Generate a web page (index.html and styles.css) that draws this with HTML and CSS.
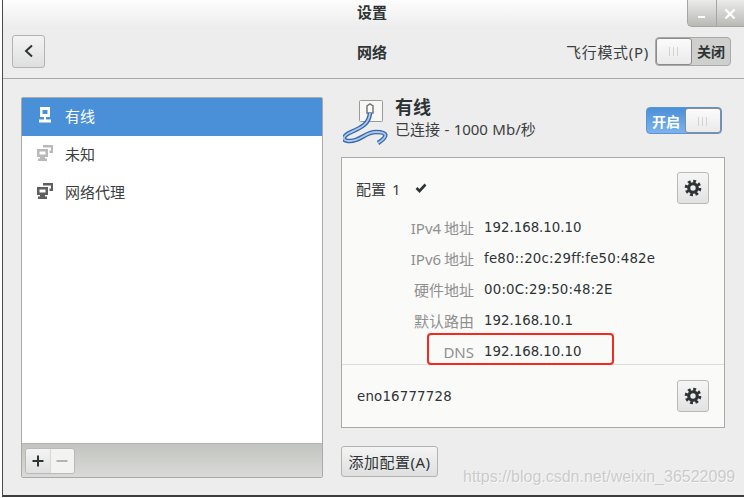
FILE: index.html
```html
<!DOCTYPE html>
<html lang="zh">
<head>
    <meta charset="UTF-8">
    <meta name="viewport" content="width=device-width, initial-scale=1.0">
    <title>设置 - 网络</title>
    <link rel="stylesheet" href="styles.css">
</head>
<body>
    <div class="window">
        <!-- 标题栏 -->
        <div class="titlebar">设置</div>
        <div class="wm-buttons">
            <span class="wm-btn"><svg width="10" height="10" viewBox="0 0 10 10"><rect x="1" y="7" width="7" height="2" fill="#fff"/></svg></span>
            <span class="wm-btn"><svg width="12" height="12" viewBox="0 0 12 12"><path d="M1.5 1.5l9 9M10.5 1.5l-9 9" stroke="#fff" stroke-width="2.4"/></svg></span>
        </div>

        <div class="header">
            <button class="back-btn">
                <svg width="12" height="14" viewBox="0 0 12 14"><path d="M9 1.5L3 7l6 5.5" fill="none" stroke="#2e3436" stroke-width="2"/></svg>
            </button>
            <div class="header-title">网络</div>
            <div class="airplane">
                <span class="airplane-label">飞行模式(P)</span>
                <div class="switch switch-off">
                    <span class="knob"></span>
                    <span class="switch-text">关闭</span>
                </div>
            </div>
        </div>

        <div class="content">
            <!-- 左侧列表 -->
            <div class="sidebar">
                <ul class="net-list">
                    <li class="net-item selected">
                        <svg class="net-icon" width="16" height="16" viewBox="0 0 16 16">
                            <path fill-rule="evenodd" d="M3 0h10v10H3zM5.500 3v4h5V3z" fill="#fff"/>
                            <rect x="7" y="10" width="2" height="3" fill="#fff"/>
                            <rect x="2" y="12.500" width="12" height="3" fill="#fff"/>
                        </svg>
                        <span>有线</span>
                    </li>
                    <li class="net-item">
                        <svg class="net-icon" width="16" height="16" viewBox="0 0 16 16" fill="#b9b9b9">
                            <path fill-rule="evenodd" d="M0 4h11v8H0zM2.500 6.500v3h6v-3z"/>
                            <path d="M3 12h5v1.500h2V16H1v-2.500h2z"/>
                            <path d="M6 0h10v8h-3.500V5.500H14V2.500H6z"/>
                        </svg>
                        <span>未知</span>
                    </li>
                    <li class="net-item">
                        <svg class="net-icon" width="16" height="16" viewBox="0 0 16 16" fill="#5f5f5f">
                            <path fill-rule="evenodd" d="M0 4h11v8H0zM2.500 6.500v3h6v-3z"/>
                            <path d="M3 12h5v1.500h2V16H1v-2.500h2z"/>
                            <path d="M6 0h10v8h-3.500V5.500H14V2.500H6z"/>
                        </svg>
                        <span>网络代理</span>
                    </li>
                </ul>
                <div class="list-toolbar">
                    <div class="btn-group">
                        <span class="tool-btn">
                            <svg width="14" height="14" viewBox="0 0 14 14"><path d="M1.5 7h11M7 1.5v11" stroke="#2e3436" stroke-width="2"/></svg>
                        </span>
                        <span class="tool-btn disabled">
                            <svg width="14" height="14" viewBox="0 0 14 14"><path d="M1.5 7h11" stroke="#b4b6b3" stroke-width="2"/></svg>
                        </span>
                    </div>
                </div>
            </div>

            <!-- 右侧详情 -->
            <div class="detail">
                <div class="device-head">
                    <svg class="cable" width="46" height="46" viewBox="0 0 46 46">
                        <rect x="17" y="1" width="23" height="21" rx="1" fill="#d5d5d2"/>
                        <rect x="16.500" y="0.500" width="23" height="21" rx="1" fill="#f7f7f5" stroke="#9a9a97"/>
                        <path d="M24 13V6l3-2 3 2v7z" fill="#fff" stroke="#777" stroke-width="1.500"/>
                        <path d="M27 13C26 25 17 28 6 33c-7 4-7 8 1 8 11 0 15-9 26-9 11 0 13 4 2 11" fill="none" stroke="#3a67a8" stroke-width="4.500"/>
                        <path d="M27 13C26 25 17 28 6 33c-7 4-7 8 1 8 11 0 15-9 26-9 11 0 13 4 2 11" fill="none" stroke="#a9c9ee" stroke-width="1.800"/>
                    </svg>
                    <div class="device-info">
                        <div class="device-name">有线</div>
                        <div class="device-status">已连接 - 1000 Mb/秒</div>
                    </div>
                    <div class="switch switch-on">
                        <span class="switch-text">开启</span>
                        <span class="knob"></span>
                    </div>
                </div>

                <div class="card">
                    <div class="profile-row">
                        <span class="profile-name">配置 1</span>
                        <svg class="check" width="12" height="10" viewBox="0 0 12 10"><path d="M1.500 5l3 3 6-6.500" fill="none" stroke="#2e3436" stroke-width="2.600"/></svg>
                        <button class="gear-btn">
                            <svg width="18" height="18" viewBox="0 0 16 16" fill="none" stroke="#2e3436">
                                <circle cx="8" cy="8" r="3.800" stroke-width="2.800"/>
                                <circle cx="8" cy="8" r="6" stroke-width="2.800" stroke-dasharray="2.500 2.210"/>
                            </svg>
                        </button>
                    </div>
                    <div class="props">
                        <span class="prop-label">IPv4 地址</span><span class="prop-value">192.168.10.10</span>
                        <span class="prop-label">IPv6 地址</span><span class="prop-value wide">fe80::20c:29ff:fe50:482e</span>
                        <span class="prop-label">硬件地址</span><span class="prop-value wide">00:0C:29:50:48:2E</span>
                        <span class="prop-label">默认路由</span><span class="prop-value">192.168.10.1</span>
                        <span class="prop-label">DNS</span><span class="prop-value">192.168.10.10</span>
                    </div>
                    <div class="card-footer">
                        <span class="iface">eno16777728</span>
                        <button class="gear-btn">
                            <svg width="18" height="18" viewBox="0 0 16 16" fill="none" stroke="#2e3436">
                                <circle cx="8" cy="8" r="3.800" stroke-width="2.800"/>
                                <circle cx="8" cy="8" r="6" stroke-width="2.800" stroke-dasharray="2.500 2.210"/>
                            </svg>
                        </button>
                    </div>
                    <div class="highlight"></div>
                </div>

                <button class="add-btn">添加配置(A)</button>
            </div>
        </div>
    </div>
    <div class="watermark">https://blog.csdn.net/weixin_36522099</div>
</body>
</html>
```

FILE: styles.css
```css
* {
    margin: 0;
    padding: 0;
    box-sizing: border-box;
    font-family: "Noto Sans", "Noto Sans CJK SC", sans-serif;
}

body {
    width: 744px;
    height: 498px;
    overflow: hidden;
    background: #fff;
    position: relative;
}

button {
    cursor: pointer;
}

.window {
    position: relative;
    height: 497px;
    margin-left: 2px;
    background: #ededed;
    border-left: 1px solid #4a4a4a;
    border-bottom: 2px solid #3d3d3d;
    color: #2e3436;
}

.titlebar {
    height: 27px;
    line-height: 25px;
    text-align: center;
    padding-right: 3px;
    font-size: 15px;
    font-weight: 700;
    background: linear-gradient(#fdfdfd, #ededed);
}

.wm-buttons {
    position: absolute;
    top: 0;
    right: 0;
    width: 57px;
    height: 27px;
    display: flex;
    border-left: 1px solid #a5a5a2;
    border-bottom: 1px solid #a5a5a2;
    border-bottom-left-radius: 5px;
    background: linear-gradient(#ebebe9, #b9b9b6);
}

.wm-btn {
    flex: 1;
    display: flex;
    align-items: center;
    justify-content: center;
    padding-top: 2px;
}

.wm-btn + .wm-btn {
    border-left: 1px solid #a5a5a2;
}

.header {
    height: 52px;
    display: flex;
    align-items: center;
    position: relative;
    padding: 0 13px 3px 9px;
    border-bottom: 1px solid #a8a8a6;
}

.back-btn {
    width: 33px;
    height: 33px;
    display: flex;
    align-items: center;
    justify-content: center;
    border: 1px solid #b3b3b1;
    border-radius: 3px;
    background: linear-gradient(#f4f4f4, #dfdfdf);
}

.header-title {
    position: absolute;
    left: 0;
    right: 3px;
    top: 14px;
    text-align: center;
    font-size: 15px;
    font-weight: 700;
}

.airplane {
    margin-left: auto;
    display: flex;
    align-items: center;
    gap: 6px;
}

.airplane-label {
    font-size: 15px;
    letter-spacing: 0.7px;
    color: #3a3f41;
}

.switch {
    width: 76px;
    height: 27px;
    display: flex;
    align-items: center;
    border: 1px solid #a9a9a7;
    border-radius: 4px;
}

.switch-off {
    height: 29px;
    background: #cfcfcd;
}

.switch-on {
    margin-left: auto;
    background: linear-gradient(#4a90d9, #7cb2ec);
    border-color: #5b93d3;
}

.knob {
    width: 36px;
    height: 100%;
    position: relative;
    border: 1px solid #8c8c8a;
    border-radius: 3px;
    background: linear-gradient(#fbfbfb, #eaeaea);
}

/* 开关上的三条竖线 */
.knob::after {
    content: "";
    position: absolute;
    left: 12px;
    top: 8px;
    width: 10px;
    height: 9px;
    background: repeating-linear-gradient(90deg, #d3d3d1 0 1px, transparent 1px 4px);
}

.switch-text {
    flex: 1;
    text-align: center;
    font-size: 14px;
    font-weight: 700;
}

.switch-on .switch-text {
    color: #fff;
}

.content {
    display: flex;
    gap: 18px;
    padding: 18px 19px 0 18px;
}

.sidebar {
    width: 302px;
    height: 381px;
    display: flex;
    flex-direction: column;
    border: 1px solid #a9a9a7;
    border-radius: 2px;
    background: #fff;
}

.net-list {
    flex: 1;
    list-style: none;
}

.net-item {
    height: 38px;
    display: flex;
    align-items: center;
    gap: 12px;
    padding: 0 0 4px 15px;
    font-size: 15px;
    color: #3a3f41;
}

.net-item.selected {
    background: #4a90d9;
    color: #fff;
}

.list-toolbar {
    height: 34px;
    padding: 4px 3px;
    border-top: 1px solid #b3b5b1;
    background: linear-gradient(#c2c4c0, #dadbd8);
}

.btn-group {
    width: 50px;
    height: 26px;
    display: flex;
    border: 1px solid #b9bab7;
    border-radius: 3px;
    overflow: hidden;
}

.tool-btn {
    flex: 1;
    display: flex;
    align-items: center;
    justify-content: center;
    background: linear-gradient(#f4f4f4, #e0e0e0);
}

.tool-btn.disabled {
    background: #f3f3f2;
    border-left: 1px solid #d8d8d6;
}

.detail {
    width: 384px;
}

.device-head {
    height: 60px;
    display: flex;
    align-items: flex-start;
    padding: 3px 3px 0 2px;
}

.device-info {
    margin-left: 6px;
    margin-top: -3px;
}

.device-name {
    font-size: 18px;
    line-height: 21px;
    font-weight: 700;
}

.device-status {
    font-size: 15px;
    line-height: 22px;
    color: #3a3f41;
    word-spacing: 0.500px;
}

.device-head .switch {
    margin-top: 7px;
}

.card {
    position: relative;
    height: 271px;
    border: 1px solid #a9a9a7;
    background: #fafaf9;
}

.profile-row {
    height: 54px;
    display: flex;
    align-items: center;
    padding: 6px 15px 0 14px;
}

.profile-name {
    font-size: 15px;
    word-spacing: 2px;
    color: #3a3f41;
}

.check {
    margin-left: 15px;
}

.gear-btn {
    width: 32px;
    height: 32px;
    margin-left: auto;
    display: flex;
    align-items: center;
    justify-content: center;
    border: 1px solid #b9b9b7;
    border-radius: 3px;
    background: linear-gradient(#f6f6f6, #e2e2e2);
}

.props {
    display: grid;
    grid-template-columns: 132px 1fr;
    column-gap: 10px;
    grid-auto-rows: 31px;
    align-items: center;
    height: 153px;
    border-bottom: 1px solid #dcdcda;
}

.prop-label {
    text-align: right;
    font-size: 15px;
    word-spacing: -1px;
    color: #909090;
}

.prop-value {
    font-family: "DejaVu Sans", "Noto Sans CJK SC", sans-serif;
    font-size: 13.33px;
    color: #2e3436;
}

.prop-value.wide {
    letter-spacing: 0.22px;
}

.card-footer {
    height: 62px;
    display: flex;
    align-items: center;
    padding: 0 15px;
}

.iface {
    font-family: "DejaVu Sans", sans-serif;
    font-size: 13.33px;
    letter-spacing: 0.2px;
}

/* 截图上手工标注的红框 */
.highlight {
    position: absolute;
    left: 85px;
    top: 175px;
    width: 187px;
    height: 32px;
    border: 2px solid #f4291f;
    border-radius: 4px;
}

.add-btn {
    display: block;
    width: 97px;
    height: 31px;
    margin-top: 18px;
    border: 1px solid #b3b3b1;
    border-radius: 3px;
    background: linear-gradient(#f4f4f4, #dfdfdf);
    font-size: 15px;
    letter-spacing: 0.5px;
    color: #2e3436;
}

.watermark {
    position: absolute;
    left: 463px;
    top: 468px;
    font-family: "Liberation Sans", sans-serif;
    font-size: 16px;
    color: rgba(190, 190, 190, 0.75);
    text-shadow: 1px 1px 0 rgba(255, 255, 255, 0.6);
}
```
